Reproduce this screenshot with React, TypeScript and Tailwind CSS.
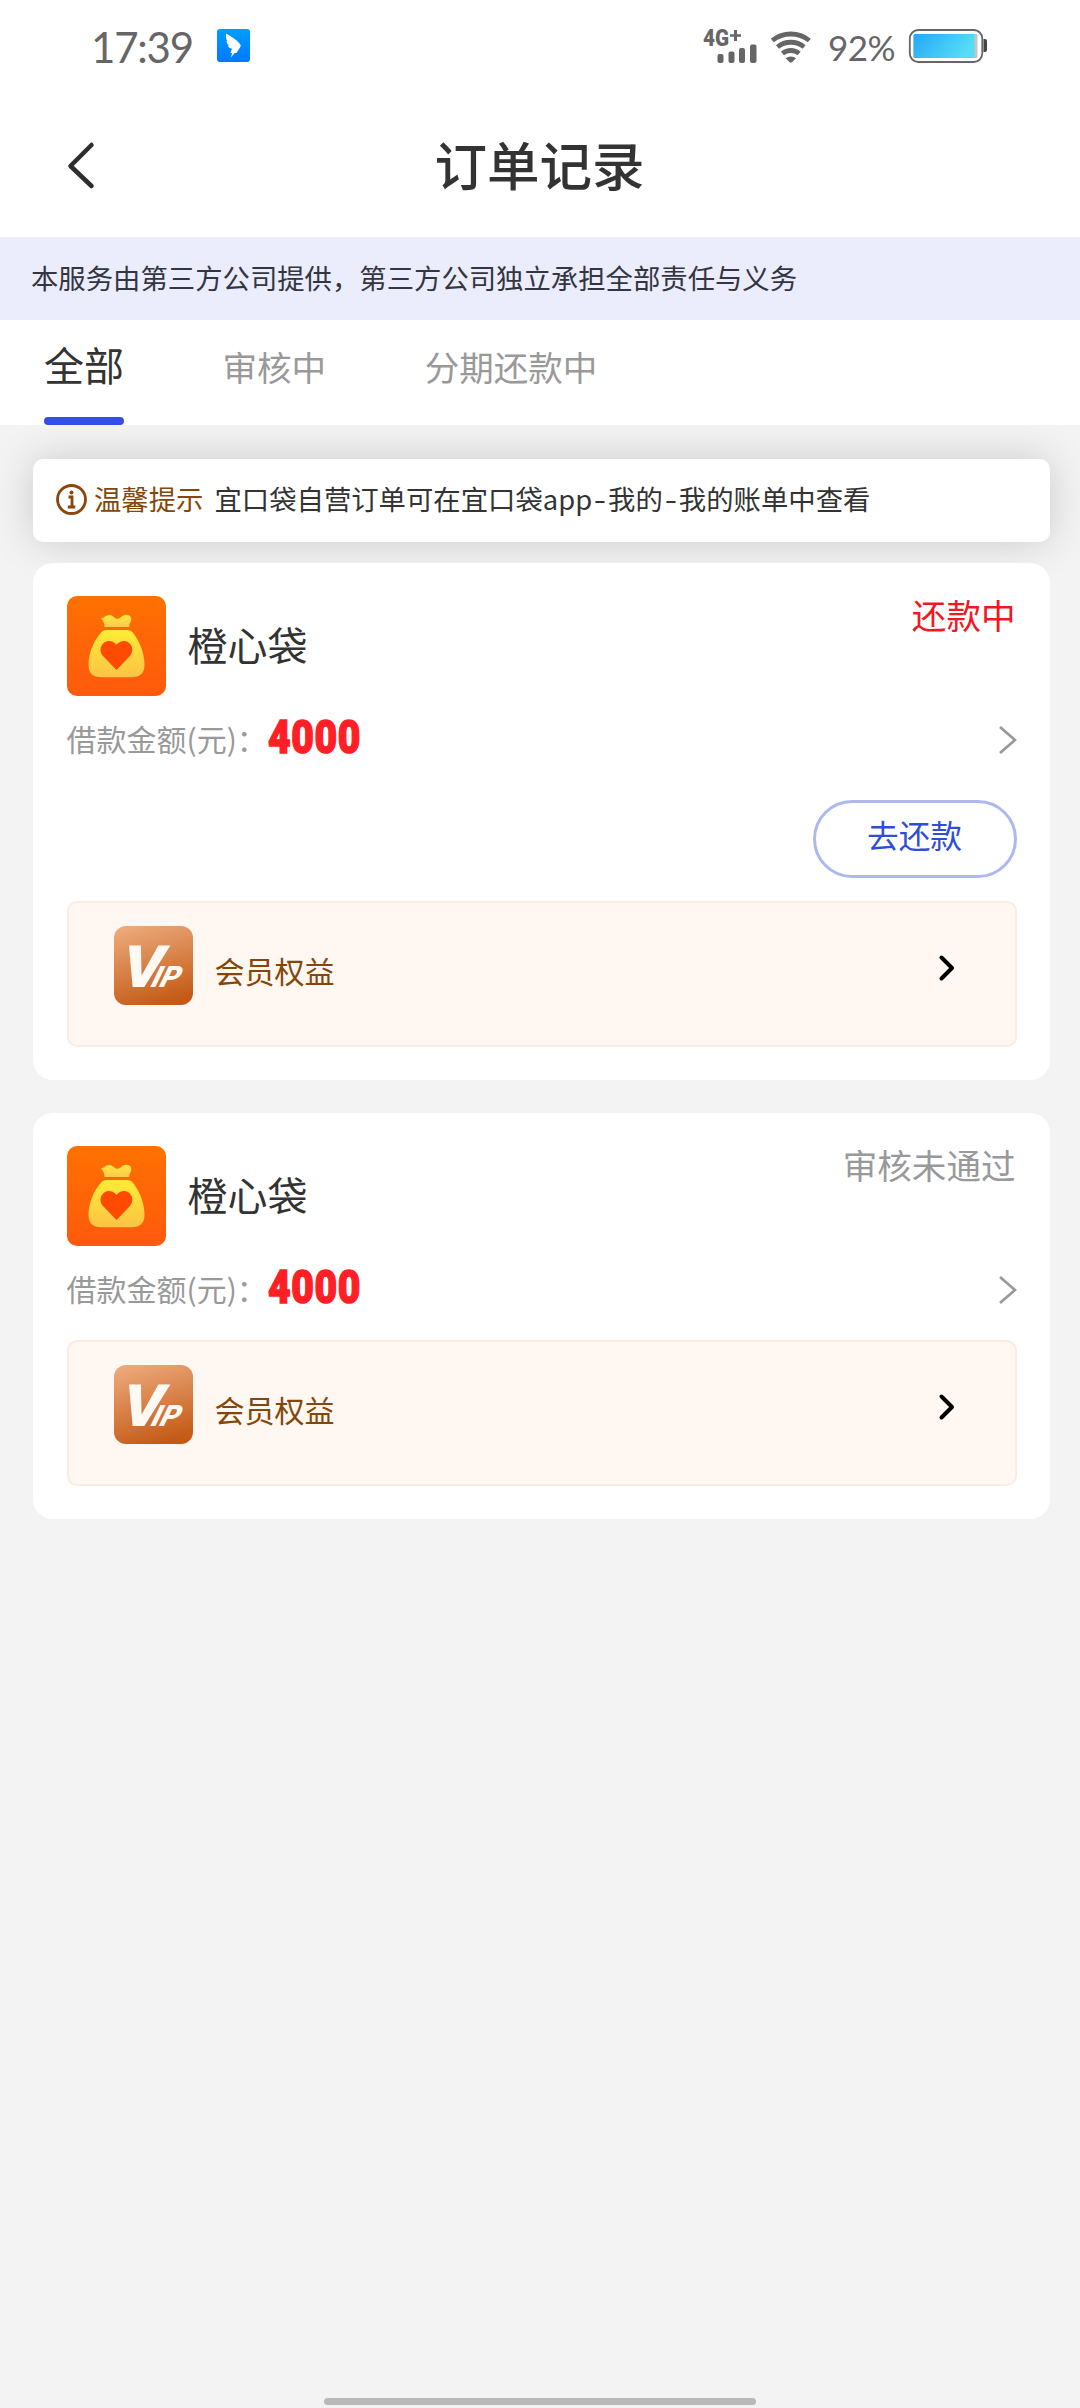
import type { ReactNode } from 'react';

function StatusBar() {
  return (
    <div className="flex h-[92px] items-start pt-[28px] text-[#666666]">
      <div className="-mt-px ml-[91px] w-[126px] font-['Lato'] text-[42px] leading-[40px] tracking-[-1.200px]">17:39</div>
      <svg className="mt-px h-[34px] w-[34px]" viewBox="0 0 34 34">
        <defs>
          <linearGradient id="wingBg" x1="0" y1="0" x2="0" y2="1">
            <stop offset="0" stopColor="#009dff" />
            <stop offset="1" stopColor="#0079ff" />
          </linearGradient>
        </defs>
        <rect width="33" height="33" rx="3" fill="url(#wingBg)" />
        <path d="M9 4.500c5 3.200 10 5.500 14 10.500c.8 1 .9 1.900.3 2.900l-4 6.100-1.800-.1-3.400 4.600.9-4.500h-1.600l1.600-4.300c-2.300-.5-3.700-1.700-4.400-3.200l1.500-.1c-1.700-1.300-2.500-2.700-2.700-4.200l1 .1C9 10.300 8.800 7.500 9 4.500z" fill="#fff" />
      </svg>
      <div className="flex-1" />
      <svg className="-mt-[8px] h-[46px] w-[54px]" viewBox="0 -8 54 46" fill="#666666">
        <text x="0" y="18" fontFamily="Roboto" fontWeight="900" fontSize="23" textLength="26" lengthAdjust="spacingAndGlyphs">4G</text>
        <path d="M27 6.200h4V2h3v4.200h4v2.600h-4V13h-3V8.800h-4z" />
        <rect x="14.500" y="26" width="6" height="9" rx="2" />
        <rect x="25.500" y="23.500" width="6" height="11.500" rx="2" />
        <rect x="36" y="20" width="6" height="15" rx="2" />
        <rect x="47" y="16.500" width="6.500" height="18.500" rx="2" />
      </svg>
      <svg className="mt-[3px] ml-[14px] h-[32px] w-[40px]" viewBox="0 0 40 32" fill="none" stroke="#666666" strokeWidth="4.800">
        <path d="M1.300 9.500a29.500 29.500 0 0 1 37 0" />
        <path d="M6.500 16a21 21 0 0 1 26.600 0" />
        <path d="M11.500 22.500a13 13 0 0 1 16.600 0" />
        <path d="M14.600 27.300a8 8 0 0 1 10.400 0l-4 4a2 2 0 0 1-2.400 0z" fill="#666666" stroke="none" />
      </svg>
      <div className="-mt-px ml-[17px] w-[80px] font-['Lato'] text-[35px] leading-[41px] tracking-[-0.600px]">92%</div>
      <svg className="mr-[91px] h-[35px] w-[81px]" viewBox="0 0 81 35">
        <defs>
          <linearGradient id="charge" x1="0" y1="0" x2="1" y2="0.300">
            <stop offset="0" stopColor="#24a8f8" />
            <stop offset="1" stopColor="#55dcf6" />
          </linearGradient>
        </defs>
        <rect x="1.800" y="2" width="72.500" height="32" rx="8.500" fill="#fff" stroke="#666" strokeWidth="1.800" />
        <rect x="5.500" y="6" width="64" height="24" rx="1.500" fill="#c5c5c5" />
        <rect x="5.500" y="6" width="61" height="24" rx="1.500" fill="url(#charge)" />
        <path d="M75.500 11h1.500a2 2 0 0 1 2 2v9a2 2 0 0 1-2 2h-1.500z" fill="#444" />
      </svg>
    </div>
  );
}

function BagLogo() {
  return (
    <svg className="h-[100px] w-[99px]" viewBox="0 0 99 100">
      <defs>
        <linearGradient id="bagBg" x1="0" y1="0" x2="0" y2="1">
          <stop offset="0" stopColor="#ff7101" />
          <stop offset="1" stopColor="#ff590d" />
        </linearGradient>
        <linearGradient id="bagTop" x1="0" y1="0" x2="0" y2="1">
          <stop offset="0" stopColor="#ffe93c" />
          <stop offset="1" stopColor="#fcc850" />
        </linearGradient>
        <linearGradient id="bagBody" x1="0" y1="0" x2="0" y2="1">
          <stop offset="0" stopColor="#ffec34" />
          <stop offset="1" stopColor="#fdc345" />
        </linearGradient>
      </defs>
      <rect width="99" height="100" rx="10" fill="url(#bagBg)" />
      <path d="M34 22.500c3-.5 4.500-3.500 8.500-3.500 3.500 0 5 3.800 8 3.800s4.500-4 8.500-4c5.500 0 6.500 5 4.200 8-.8 1-.9 2.500-.9 4.200H37.500c0-3.500-1-6-3.500-8.500z" fill="url(#bagTop)" />
      <path d="M40 34h20c3 0 4.500 1 6.300 3.200C73 45.500 77.500 58 77.500 68.500c0 9-4.500 12.800-12.500 12.800H34c-8 0-12.500-4-12.500-12.500 0-11 5-23.500 12-31.500C35.300 35 37 34 40 34z" fill="url(#bagBody)" />
      <path d="M49.500 74L36.500 60.500c-8.500-9 3.500-22 13-11.800 9.500-10.200 21.500 2.800 13 11.800z" fill="#ff4b02" />
    </svg>
  );
}

function VipLogo() {
  return (
    <svg className="h-[79px] w-[79px]" viewBox="0 0 79 79">
      <defs>
        <linearGradient id="vipBg" x1="0.300" y1="0" x2="0.600" y2="1">
          <stop offset="0" stopColor="#eba778" />
          <stop offset="1" stopColor="#c45a16" />
        </linearGradient>
      </defs>
      <rect width="79" height="79" rx="12" fill="url(#vipBg)" />
      <g fill="#fff9f3" fontFamily="Roboto" fontWeight="900">
        <text transform="translate(4 60.500) skewX(-15)" fontSize="58.500" textLength="41" lengthAdjust="spacingAndGlyphs">V</text>
        <text transform="translate(34.500 60.500) skewX(-26)" fontSize="29.500" textLength="27.500" lengthAdjust="spacingAndGlyphs">IP</text>
      </g>
    </svg>
  );
}

function MemberRow({ className }: { className: string }) {
  return (
    <div className={`flex h-[146px] items-start rounded-[10px] border-2 border-[#faece3] bg-[#fff7f1] pt-[23px] pl-[45px] ${className}`}>
      <VipLogo />
      <div className="ml-[22px] flex-1 pt-[22px] text-[30px] leading-[45px] text-[#854709]">会员权益</div>
      <svg className="mt-[28px] mr-[58px] h-[28px] w-[20px]" viewBox="0 0 20 28" fill="none" stroke="#000" strokeWidth="4" strokeLinecap="round" strokeLinejoin="round">
        <path d="M4.500 3.500l10.500 10.500L4.500 24.500" />
      </svg>
    </div>
  );
}

function OrderCard({ status, statusClass, children }: { status: string; statusClass: string; children: ReactNode }) {
  return (
    <div className="relative rounded-[20px] bg-white px-[33.500px] pt-[33px] pb-[33px]">
      <div className="flex h-[100px]">
        <BagLogo />
        <div className="ml-[22px] flex-1 pt-[18px] text-[40px] leading-[60px] text-[#333]">橙心袋</div>
        <div className={`-mt-[7px] mr-px text-[34.560px] leading-[50px] ${statusClass}`}>{status}</div>
      </div>
      <div className="flex h-[86px] items-center text-[#999]">
        <div className="w-[201px] pb-[2px] text-[30px] leading-[44px] whitespace-nowrap">借款金额(元)：</div>
        <div className="flex-1">
          <div className="-mt-[5px] w-[112px] origin-left scale-x-[0.830] font-['Roboto'] text-[47px] leading-[56px] font-black tracking-[0.800px] text-[#ff1f26] [-webkit-text-stroke:1.600px_#ff1f26]">4000</div>
        </div>
        <svg className="mt-px h-[30px] w-[18px]" viewBox="0 0 18 30" fill="none" stroke="#999" strokeWidth="2.800">
          <path d="M1 2l15 13L1 28" />
        </svg>
      </div>
      {children}
    </div>
  );
}

export default function App() {
  return (
    <div className="flex h-[2408px] w-[1080px] flex-col overflow-hidden bg-[#f3f3f3] font-['Noto_Sans_CJK_SC',sans-serif]">
      <div className="relative z-10 bg-white">
        <StatusBar />
        <div className="flex h-[145px] items-center">
          <svg className="ml-[66px] h-[50px] w-[30px]" viewBox="0 0 30 50" fill="none" stroke="#2d2d2d" strokeWidth="4.500" strokeLinecap="round" strokeLinejoin="round">
            <path d="M25.500 5L4.500 26L25.500 46" />
          </svg>
          <h1 className="mr-[97px] flex-1 pb-[4px] text-center text-[52.500px] leading-[76px] font-medium text-[#333]">订单记录</h1>
        </div>
        <div className="flex h-[83px] items-center bg-[#ebecfc] pb-[2px] pl-[31px] text-[27.360px] text-[#333540]">
          本服务由第三方公司提供，第三方公司独立承担全部责任与义务
        </div>
        <div className="flex h-[105px] items-start gap-[98.500px] pl-[44px] text-[34.560px] text-[#999]">
          <div className="flex h-[105px] flex-col justify-between text-[40px] text-[#333]">
            <span className="mt-[14px] leading-[60px]">全部</span>
            <span className="h-[8px] w-[80px] rounded-[4px] bg-[#344fe1]" />
          </div>
          <div className="mt-[21px] leading-[50px]">审核中</div>
          <div className="mt-[21px] leading-[50px]">分期还款中</div>
        </div>
      </div>

      <div className="mt-[34px] mr-[30px] ml-[33px] flex flex-col">
        <div className="flex h-[83px] items-center rounded-[10px] bg-white pl-[22px] text-[27.360px] text-[#333] shadow-[0_0_42px_rgba(0,0,0,0.170)]">
          <svg className="-mt-[2px] h-[33px] w-[33px]" viewBox="0 0 33 33" fill="none" stroke="#88470f" strokeWidth="2.800">
            <circle cx="16.500" cy="16.500" r="14" />
            <path d="M13.500 14h3.500v9.500M12.800 24h7.500" />
            <circle cx="16.500" cy="9.500" r="2" fill="#88470f" stroke="none" />
          </svg>
          <span className="ml-[6px] pb-[3px] text-[#854709]">温馨提示</span>
          <span className="ml-[11px] flex pb-[3px]">
            宜口袋自营订单可在宜口袋app
            <span className="w-[16px] origin-center scale-x-130 text-center">-</span>
            我的
            <span className="w-[16px] origin-center scale-x-130 text-center">-</span>
            我的账单中查看
          </span>
        </div>

        <div className="mt-[21px] flex flex-col gap-[33px]">
          <OrderCard status="还款中" statusClass="text-[#f0191e]">
            <button className="mt-[18px] ml-auto flex h-[78px] w-[204px] items-center justify-center rounded-full border-[3px] border-[#adb8ef] pb-[9px] text-[31.680px] text-[#304dd8]">
              去还款
            </button>
            <MemberRow className="mt-[23px]" />
          </OrderCard>
          <OrderCard status="审核未通过" statusClass="text-[#999]">
            <MemberRow className="mt-[8px]" />
          </OrderCard>
        </div>
      </div>

      <div className="mx-auto mt-auto mb-[3px] h-[7px] w-[432px] rounded-full bg-[#b9b9b9]" />
    </div>
  );
}
